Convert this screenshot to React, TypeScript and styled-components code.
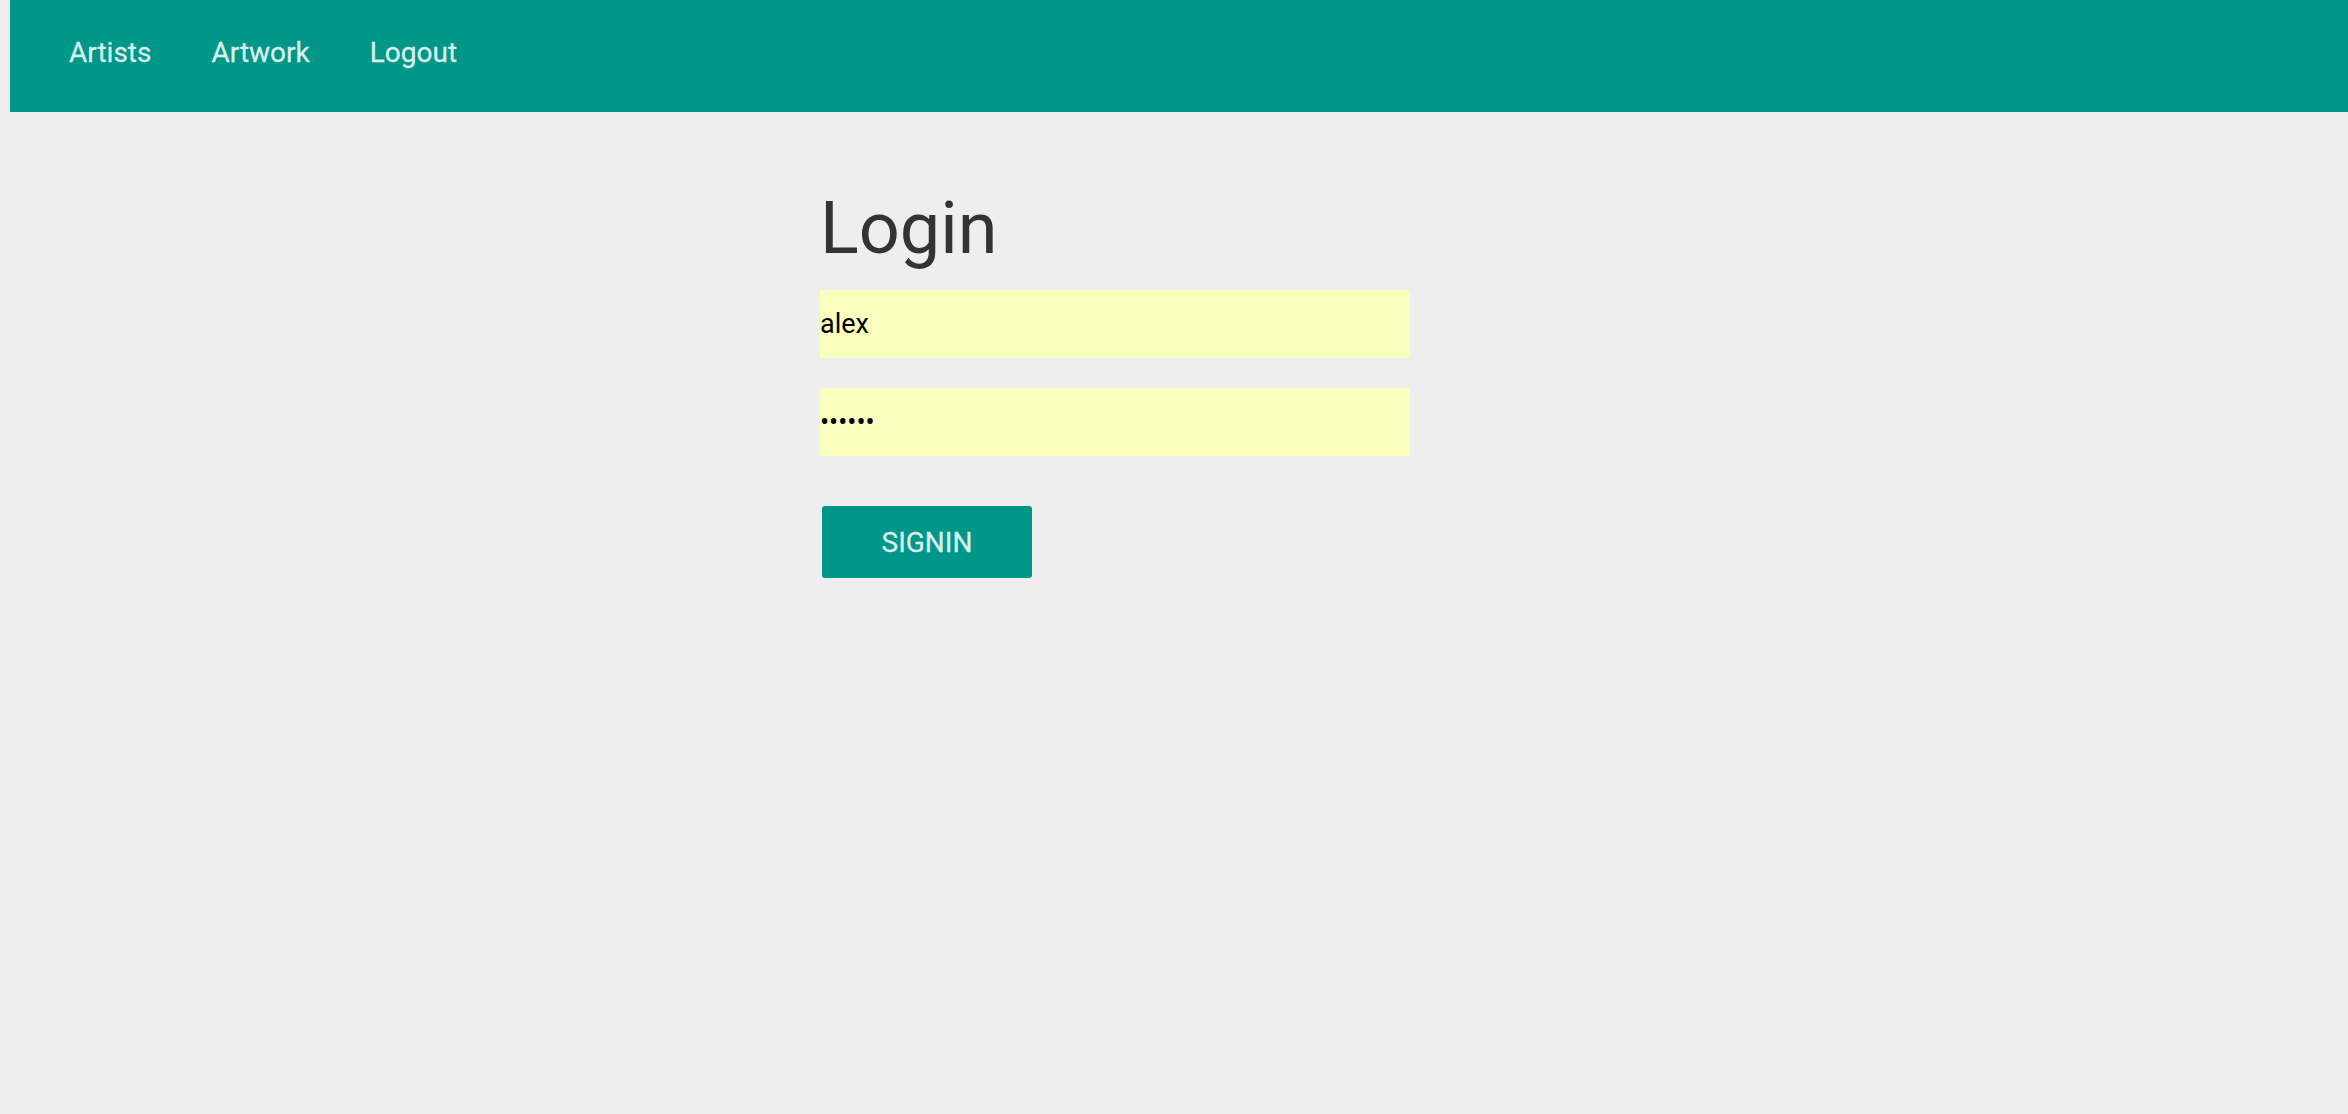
import React from "react";
import styled, { createGlobalStyle } from "styled-components";

const GlobalStyle = createGlobalStyle`
  html, body {
    margin: 0;
    padding: 0;
    background: #eeeeee;
    font-family: Roboto, "Noto Sans", "Liberation Sans", sans-serif;
  }
  * { box-sizing: border-box; }
`;

const Page = styled.div`
  min-height: 1114px;
  background: #eeeeee;
`;

const NavBar = styled.nav`
  margin-left: 10px;
  height: 112px;
  background: #009688;
  display: flex;
  align-items: flex-start;
  padding: 36px 0 0 59px;
  gap: 60px;
`;

const NavLink = styled.a`
  font-family: Roboto, "Liberation Sans", sans-serif;
  font-size: 28px;
  line-height: normal;
  color: #d8efec;
  text-decoration: none;
  cursor: pointer;
  -webkit-text-stroke: 0.3px #d8efec;
`;

const Main = styled.main`
  padding: 77px 0 0 820px;
`;

const Form = styled.form`
  width: 590px;
  display: flex;
  flex-direction: column;
  align-items: flex-start;
`;

const Title = styled.h1`
  margin: 0 0 22px 0;
  font-family: Roboto, "Liberation Sans", sans-serif;
  font-weight: 400;
  font-size: 72px;
  line-height: 79px;
  color: #333333;
`;

const Field = styled.input<{ $last?: boolean }>`
  width: 590px;
  height: 68px;
  margin: 0 0 ${(p) => (p.$last ? "50px" : "30px")} 0;
  padding: 0;
  border: none;
  outline: none;
  background: #faffbd;
  font-family: Roboto, "Liberation Sans", sans-serif;
  font-size: 27px;
  color: #000000;
`;

const Button = styled.button`
  margin-left: 2px;
  width: 210px;
  height: 72px;
  border: none;
  border-radius: 3px;
  background: #009688;
  color: #d8efec;
  font-family: Roboto, "Liberation Sans", sans-serif;
  font-size: 28px;
  text-transform: uppercase;
  display: flex;
  align-items: center;
  justify-content: center;
  padding: 0;
  cursor: pointer;
  -webkit-text-stroke: 0.3px #d8efec;
`;

export default function App() {
  return (
    <Page>
      <GlobalStyle />
      <NavBar>
        <NavLink>Artists</NavLink>
        <NavLink>Artwork</NavLink>
        <NavLink>Logout</NavLink>
      </NavBar>
      <Main>
        <Form onSubmit={(e) => e.preventDefault()}>
          <Title>Login</Title>
          <Field type="text" defaultValue="alex" />
          <Field type="password" defaultValue="secret" $last />
          <Button type="submit">Signin</Button>
        </Form>
      </Main>
    </Page>
  );
}
